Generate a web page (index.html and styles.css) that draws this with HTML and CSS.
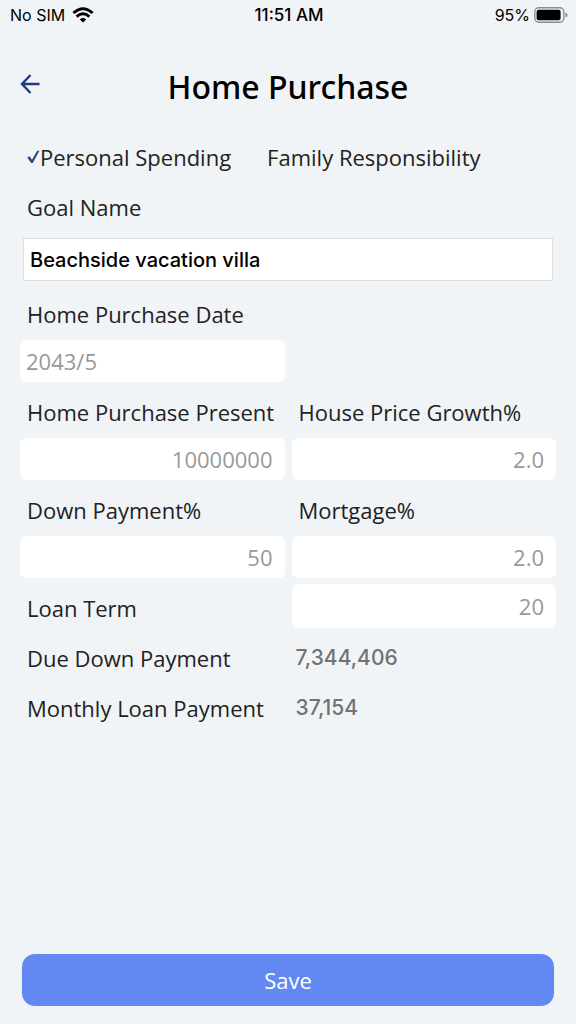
FILE: index.html
```html
<!DOCTYPE html>
<html lang="en">
<head>
<meta charset="UTF-8">
<meta name="viewport" content="width=device-width, initial-scale=1.0">
<title>Home Purchase</title>
<link rel="stylesheet" href="styles.css">
</head>
<body>
<div class="statusbar">
  <div class="status-left">
    <span>No SIM</span>
    <svg class="wifi" viewBox="0 0 22 16" width="22" height="16">
      <path d="M1.4 6 Q11 -2.6 20.6 6" fill="none" stroke="#000" stroke-width="3"/>
      <path d="M4.6 9.6 Q11 4 17.4 9.6" fill="none" stroke="#000" stroke-width="2.8"/>
      <path d="M7.8 12.4 Q11 9.6 14.2 12.4 L11 15.6 Z" fill="#000"/>
    </svg>
  </div>
  <div class="status-time">11:51 AM</div>
  <div class="status-right">
    <span>95%</span>
    <svg class="battery" viewBox="0 0 34 16" width="34" height="16">
      <rect x="0.8" y="0.8" width="29" height="14.4" rx="4" fill="none" stroke="#8b8d8f" stroke-width="1.4"/>
      <rect x="2.6" y="2.8" width="24" height="10.4" rx="2" fill="#000"/>
      <path d="M31.4 5.4 Q33.6 6.2 33.6 8 Q33.6 9.8 31.4 10.6 Z" fill="#8b8d8f"/>
    </svg>
  </div>
</div>

<div class="header">
  <button type="button" class="back" aria-label="Back">
    <svg viewBox="0 0 20 20" width="20" height="20">
      <path d="M19.5 10 H2 M10.5 1 L2 10 L10.5 19" fill="none" stroke="#223a86" stroke-width="2.4"/>
    </svg>
  </button>
  <h1>Home Purchase</h1>
</div>

<form class="goal-form">
  <div class="types">
    <label class="type">
      <input type="radio" name="type" value="personal" checked>
      <svg class="tick" viewBox="0 0 13 14" width="13" height="14">
        <path d="M0.2 7.4 L2.6 6.2 L5 9.8 L10.2 0.8 L12.4 0.8 L5.8 13 L4.2 13 Z" fill="#2d4788"/>
      </svg>
      <span>Personal Spending</span>
    </label>
    <label class="type">
      <input type="radio" name="type" value="family">
      <svg class="tick" viewBox="0 0 13 14" width="13" height="14">
        <path d="M0.2 7.4 L2.6 6.2 L5 9.8 L10.2 0.8 L12.4 0.8 L5.8 13 L4.2 13 Z" fill="#2d4788"/>
      </svg>
      <span>Family Responsibility</span>
    </label>
  </div>

  <label class="name" for="goalName">Goal Name</label>
  <input type="text" class="goal-name" id="goalName" value="Beachside vacation villa">

  <div class="fields">
    <div class="field">
      <label class="name" for="purchaseDate">Home Purchase Date</label>
      <input type="text" class="box" id="purchaseDate" value="2043/5">
    </div>
    <div></div>

    <div class="field">
      <label class="name" for="presentValue">Home Purchase Present</label>
      <input type="text" class="box number" id="presentValue" value="10000000">
    </div>
    <div class="field">
      <label class="name" for="priceGrowth">House Price Growth%</label>
      <input type="text" class="box number" id="priceGrowth" value="2.0">
    </div>

    <div class="field">
      <label class="name" for="downPayment">Down Payment%</label>
      <input type="text" class="box number" id="downPayment" value="50">
    </div>
    <div class="field">
      <label class="name" for="mortgage">Mortgage%</label>
      <input type="text" class="box number" id="mortgage" value="2.0">
    </div>

    <label class="name" for="loanTerm">Loan Term</label>
    <input type="text" class="box number tall" id="loanTerm" value="20">

    <label class="name" for="dueDown">Due Down Payment</label>
    <output class="result" id="dueDown">7,344,406</output>

    <label class="name" for="monthlyLoan">Monthly Loan Payment</label>
    <output class="result" id="monthlyLoan">37,154</output>
  </div>

  <button type="submit" class="save">Save</button>
</form>
</body>
</html>
```

FILE: styles.css
```css
* {
  box-sizing: border-box;
}
body {
  display: flex;
  flex-direction: column;
  min-height: 100vh;
  margin: 0;
  background-color: #f0f4f7;
  color: #222;
  font-family: "Open Sans", "Noto Sans", sans-serif;
  font-size: 22px;
}
input, button {
  font: inherit;
}

/* status bar */
.statusbar {
  display: grid;
  grid-template-columns: 1fr auto 1fr;
  align-items: center;
  height: 30px;
  padding: 0 8px 0 10px;
  font-family: Inter, sans-serif;
  font-size: 16px;
  color: #000;
}
.status-left, .status-right {
  display: flex;
  align-items: center;
  gap: 7px;
}
.status-right {
  justify-content: flex-end;
  gap: 4px;
}
.status-time {
  font-size: 17px;
  font-weight: 500;
}

.header {
  display: grid;
  grid-template-columns: 40px 1fr 40px;
  align-items: center;
  height: 102px;
  padding: 10px 20px 0;
}
.header h1 {
  margin: 0;
  text-align: center;
  font-family: "Noto Sans", sans-serif;
  font-size: 32px;
  font-weight: 500;
  color: #000;
}
.back {
  display: flex;
  padding: 0 0 4px;
  border: none;
  background: none;
  cursor: pointer;
}

/* form */
.goal-form {
  flex: 1;
  display: flex;
  flex-direction: column;
  padding: 0 20px 18px;
}
.types {
  display: flex;
  gap: 23px;
  padding-left: 7px;
}
.type {
  display: flex;
  align-items: center;
  height: 50px;
  cursor: pointer;
}
.type input {
  position: absolute;
  opacity: 0;
}
.tick {
  visibility: hidden;
}
.type input:checked + .tick {
  visibility: visible;
}
.name {
  display: block;
  padding-left: 7px;
  line-height: 50px;
  white-space: nowrap;
}
.goal-name {
  height: 43px;
  margin: 6px 3px 8px;
  padding: 0 6px;
  border: 1px solid #dcdfe2;
  background-color: #fff;
  font-family: Inter, sans-serif;
  font-size: 20px;
  font-weight: 500;
  color: #000;
}
.fields {
  display: grid;
  grid-template-columns: 1fr 1fr;
  column-gap: 7px;
}
.box {
  display: block;
  width: 100%;
  height: 42px;
  margin: 1px 0 5px;
  padding: 0 6px;
  border: none;
  border-radius: 6px;
  background-color: #fff;
  color: #999;
}
.number {
  padding-right: 12px;
  text-align: right;
}
.tall {
  height: 44px;
}
.result {
  padding-left: 4px;
  line-height: 50px;
  font-family: Inter, sans-serif;
  font-size: 21px;
  font-weight: 500;
  color: #707275;
}
.save {
  height: 52px;
  margin: auto 2px 0;
  border: none;
  border-radius: 13px;
  background-color: #6289f2;
  color: #fff;
  cursor: pointer;
}
```
